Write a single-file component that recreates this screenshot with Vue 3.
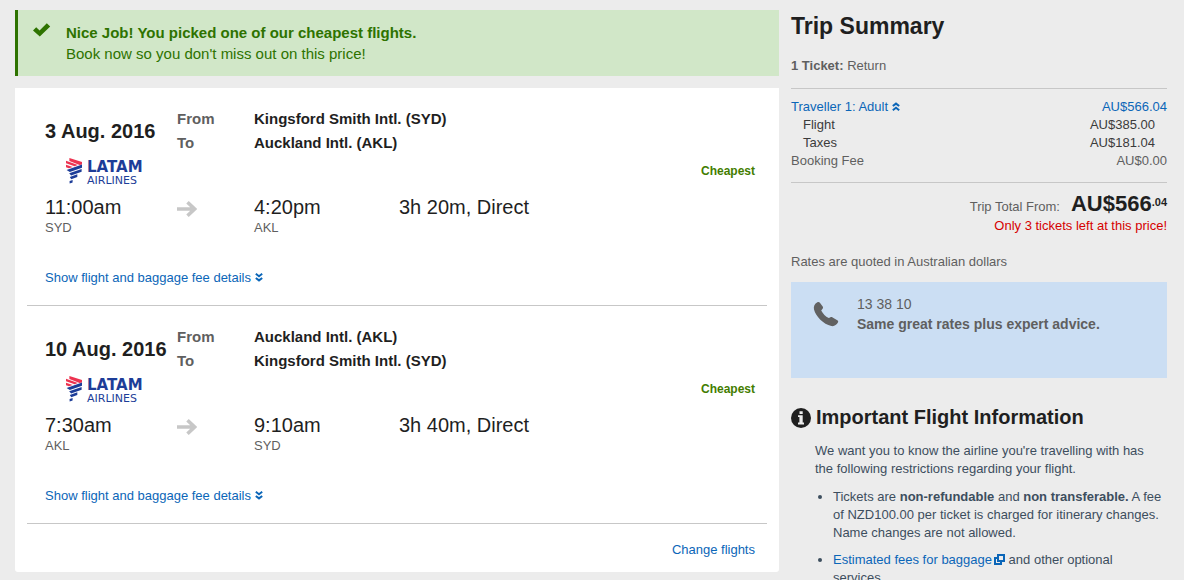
<script setup>
import { ref } from 'vue'

const legs = ref([
  {
    date: '3 Aug. 2016',
    from: 'Kingsford Smith Intl. (SYD)',
    to: 'Auckland Intl. (AKL)',
    departTime: '11:00am',
    departCode: 'SYD',
    arriveTime: '4:20pm',
    arriveCode: 'AKL',
    duration: '3h 20m, Direct'
  },
  {
    date: '10 Aug. 2016',
    from: 'Auckland Intl. (AKL)',
    to: 'Kingsford Smith Intl. (SYD)',
    departTime: '7:30am',
    departCode: 'AKL',
    arriveTime: '9:10am',
    arriveCode: 'SYD',
    duration: '3h 40m, Direct'
  }
])

const fareOpen = ref(true)
</script>

<template>
  <div class="page">
    <main class="main">
      <div class="banner" role="status">
        <svg class="check" width="18" height="14" viewBox="0 0 18 14" aria-hidden="true">
          <path d="M0 7.4 3.2 4.2 6.6 7.4 13.8 .2 17.2 3.5 6.8 13.4Z" fill="#2e7300" />
        </svg>
        <div>
          <strong>Nice Job! You picked one of our cheapest flights.</strong>
          <p>Book now so you don't miss out on this price!</p>
        </div>
      </div>

      <div class="card">
        <section v-for="leg in legs" :key="leg.date" class="leg">
          <div class="grid">
            <h2 class="date">{{ leg.date }}</h2>
            <div class="labels"><span>From</span><span>To</span></div>
            <div class="places"><span>{{ leg.from }}</span><span>{{ leg.to }}</span></div>

            <svg class="logo" width="84" height="32" viewBox="0 0 84 32" role="img" aria-label="LATAM Airlines">
              <g fill="#ed3350">
                <path d="M4.4 1.1 17 5.1V7.4L14.6 7.9 4.4 4.1Z" />
                <path d="M1 3.8 12.9 8.1 9.6 9.2 1 6.3Z" />
                <path d="M1 7.8 7.7 10 4 11.3 1 10.3Z" />
              </g>
              <g fill="#1d3d98">
                <path d="M17 7.6V10.8L4.8 15 1.6 12.9Z" />
                <path d="M16.6 12V14.8L6.1 18.6 4.2 16.3Z" />
                <path d="M12.3 17.2V20L6.3 22.2 4.8 19.9Z" />
                <path d="M7.6 22.9V25.6L4.6 26.6V24Z" />
              </g>
              <text x="22" y="15" class="logo-name">LATAM</text>
              <text x="22" y="27" class="logo-sub">AIRLINES</text>
            </svg>
            <span class="tag">Cheapest</span>

            <div class="stop depart">
              <span class="time">{{ leg.departTime }}</span>
              <span class="code">{{ leg.departCode }}</span>
            </div>
            <svg class="arrow" width="20" height="16" viewBox="0 0 20 16" aria-hidden="true">
              <path d="M0 8H17M10.5 1.3 17.6 8 10.5 14.7" fill="none" stroke="#c7c7c7" stroke-width="3.6" />
            </svg>
            <div class="stop arrive">
              <span class="time">{{ leg.arriveTime }}</span>
              <span class="code">{{ leg.arriveCode }}</span>
            </div>
            <span class="time duration">{{ leg.duration }}</span>
          </div>
          <button type="button" class="toggle">
            Show flight and baggage fee details
            <svg width="8" height="9" viewBox="0 0 8 9" aria-hidden="true">
              <path d="M.8 .8 4 3.2 7.2 .8M.8 5 4 7.4 7.2 5" fill="none" stroke="#0b66b8" stroke-width="2" />
            </svg>
          </button>
        </section>
        <div class="actions"><a href="#">Change flights</a></div>
      </div>
    </main>

    <aside class="side">
      <h1>Trip Summary</h1>
      <p class="tickets"><strong>1 Ticket:</strong> Return</p>

      <div class="costs">
        <table>
          <tbody>
            <tr class="traveller">
              <th scope="row">
                <button type="button" class="toggle" :aria-expanded="fareOpen" @click="fareOpen = !fareOpen">
                  Traveller 1: Adult
                  <svg width="8" height="9" viewBox="0 0 8 9" aria-hidden="true">
                    <path d="M.8 4 4 1.6 7.2 4M.8 8.2 4 5.8 7.2 8.2" fill="none" stroke="#0b66b8" stroke-width="2" />
                  </svg>
                </button>
              </th>
              <td>AU$566.04</td>
            </tr>
            <tr v-if="fareOpen" class="part"><th scope="row">Flight</th><td>AU$385.00</td></tr>
            <tr v-if="fareOpen" class="part"><th scope="row">Taxes</th><td>AU$181.04</td></tr>
            <tr><th scope="row">Booking Fee</th><td>AU$0.00</td></tr>
          </tbody>
        </table>
      </div>

      <p class="total">
        <span>Trip Total From:</span>
        <strong>AU$566<sup>.04</sup></strong>
      </p>
      <p class="urgent">Only 3 tickets left at this price!</p>
      <p class="rates">Rates are quoted in Australian dollars</p>

      <div class="phone">
        <svg width="26" height="26" viewBox="0 0 26 26" aria-hidden="true">
          <path
            d="M4.4 1.2C5.4.7 6.3.9 6.9 1.7L9.7 5.6C10.3 6.6 10.1 7.5 9.2 8.3L8.2 9.4C9.9 12.6 12.5 15.4 15.7 17.1L17.1 16.4C18 15.9 18.8 15.9 19.6 16.5L24.3 19.3C25.3 20 25.4 20.7 24.9 21.6C23.5 24.1 21 25.6 18.4 25C10.3 23.2 2.9 15.6 1 8.5C.3 5.4 1.6 2.6 4.4 1.2Z"
            fill="#616161"
          />
        </svg>
        <div>
          <p>13 38 10</p>
          <strong>Same great rates plus expert advice.</strong>
        </div>
      </div>

      <section class="info">
        <h2>
          <svg width="20" height="20" viewBox="0 0 20 20" aria-hidden="true">
            <circle cx="10" cy="10" r="10" fill="#1f1f1f" />
            <path d="M8.5 3.2H11.7V5.9H8.5ZM7 7.3H11.7V14.6H13V16.4H7V14.6H8.4V9.1H7Z" fill="#ececec" />
          </svg>
          Important Flight Information
        </h2>
        <p>We want you to know the airline you're travelling with has the following restrictions regarding your flight.</p>
        <ul>
          <li>
            Tickets are <strong>non-refundable</strong> and <strong>non transferable.</strong> A fee of NZD100.00 per
            ticket is charged for itinerary changes. Name changes are not allowed.
          </li>
          <li>
            <a href="#">Estimated fees for baggage<svg class="external" width="11" height="11" viewBox="0 0 11 11" aria-hidden="true">
              <path d="M4 1H10V7H4Z M3 4H1V10H7V8" fill="none" stroke="#0b66b8" stroke-width="2" />
            </svg></a>
            and other optional services.
          </li>
        </ul>
      </section>
    </aside>
  </div>
</template>

<style>
html {
  height: 100%;
  overflow: hidden;
  background: #ececec;
}
</style>

<style scoped>
.page {
  display: grid;
  grid-template-columns: minmax(0, 1fr) 376px;
  align-items: start;
  gap: 12px;
  padding: 10px 17px 8px 15px;
  background: #ececec;
  color: #5f5f5f;
  font: 13px/18px "Liberation Sans", Arial, sans-serif;
}
h1, h2, p, ul {
  margin: 0;
  padding: 0;
}
a {
  color: #0b66b8;
  text-decoration: none;
}
.banner {
  display: flex;
  gap: 15px;
  margin-bottom: 12px;
  padding: 12px 15px;
  border-left: 3px solid #2e7300;
  background: #d1e7c8;
  color: #2e7300;
  font-size: 15px;
  line-height: 21px;
}
.check {
  flex: none;
  margin-top: 1px;
}
.card {
  border-radius: 0 0 3px 3px;
  background: #fff;
}
.leg {
  margin: 0 12px;
  padding: 19px 12px 18px 18px;
  border-bottom: 1px solid #c7c7c7;
}
.grid {
  display: grid;
  grid-template-columns: 132px 77px 145px minmax(0, 1fr);
  grid-template-rows: 48px 32px auto;
}
.date {
  align-self: center;
  color: #1f1f1f;
  font-size: 20px;
  line-height: 26px;
  white-space: nowrap;
}
.labels,
.places {
  display: flex;
  flex-direction: column;
  font-size: 15px;
  font-weight: bold;
  line-height: 24px;
}
.places {
  grid-column: 3 / 5;
  color: #1f1f1f;
}
.logo {
  grid-column: 1;
  margin: 2px 0 -2px 20px;
}
.logo-name {
  fill: #1d3d98;
  font: bold 15px "DejaVu Sans", sans-serif;
}
.logo-sub {
  fill: #1d3d98;
  font: 11px "DejaVu Sans", sans-serif;
}
.tag {
  grid-column: 4;
  align-self: center;
  justify-self: end;
  color: #437d00;
  font-size: 12px;
  font-weight: bold;
}
.stop {
  display: flex;
  flex-direction: column;
  margin-top: 8px;
}
.depart {
  grid-column: 1;
}
.time {
  color: #1f1f1f;
  font-size: 20px;
  line-height: 24px;
}
.arrow {
  margin-top: 14px;
}
.duration {
  margin-top: 8px;
}
.toggle {
  padding: 0;
  border: 0;
  background: none;
  color: #0b66b8;
  font: inherit;
  cursor: pointer;
}
.leg .toggle {
  display: block;
  margin-top: 32px;
}
.actions {
  padding: 17px 24px 13px;
  text-align: right;
}
h1 {
  color: #1f1f1f;
  font-size: 23px;
  line-height: 32px;
}
.tickets {
  margin: 15px 0 13px;
}
.costs {
  padding: 9px 0 12px;
  border: solid #c7c7c7;
  border-width: 1px 0;
}
table {
  width: 100%;
  border-collapse: collapse;
}
th,
td {
  padding: 0;
  font-weight: normal;
  text-align: left;
}
td {
  text-align: right;
}
.traveller td {
  color: #0b66b8;
}
.part {
  color: #3b3b3b;
}
.part th {
  padding-left: 12px;
}
.part td {
  padding-right: 12px;
}
.total {
  display: flex;
  align-items: baseline;
  justify-content: flex-end;
  gap: 11px;
  padding-top: 8px;
}
.total strong {
  color: #1f1f1f;
  font-size: 22px;
  line-height: 26px;
}
.total sup {
  font-size: 11px;
  line-height: 11px;
  vertical-align: 5px;
}
.urgent {
  color: #d60000;
  text-align: right;
}
.rates {
  margin: 18px 0 11px;
}
.phone {
  display: flex;
  align-items: flex-start;
  gap: 18px;
  min-height: 72px;
  padding: 12px 22px;
  background: #cbdef3;
  font-size: 14px;
  line-height: 20px;
}
.phone svg {
  flex: none;
  margin-top: 7px;
}
.info {
  color: #3d4e5e;
}
.info h2 {
  display: flex;
  align-items: center;
  gap: 5px;
  margin: 27px 0 12px;
  color: #1f1f1f;
  font-size: 20px;
  line-height: 25px;
}
.info p {
  padding: 0 12px 0 24px;
}
.info ul {
  margin-top: 10px;
  padding-left: 42px;
}
.info li + li {
  margin-top: 9px;
}
.external {
  margin-left: 2px;
  vertical-align: -1px;
}
</style>
